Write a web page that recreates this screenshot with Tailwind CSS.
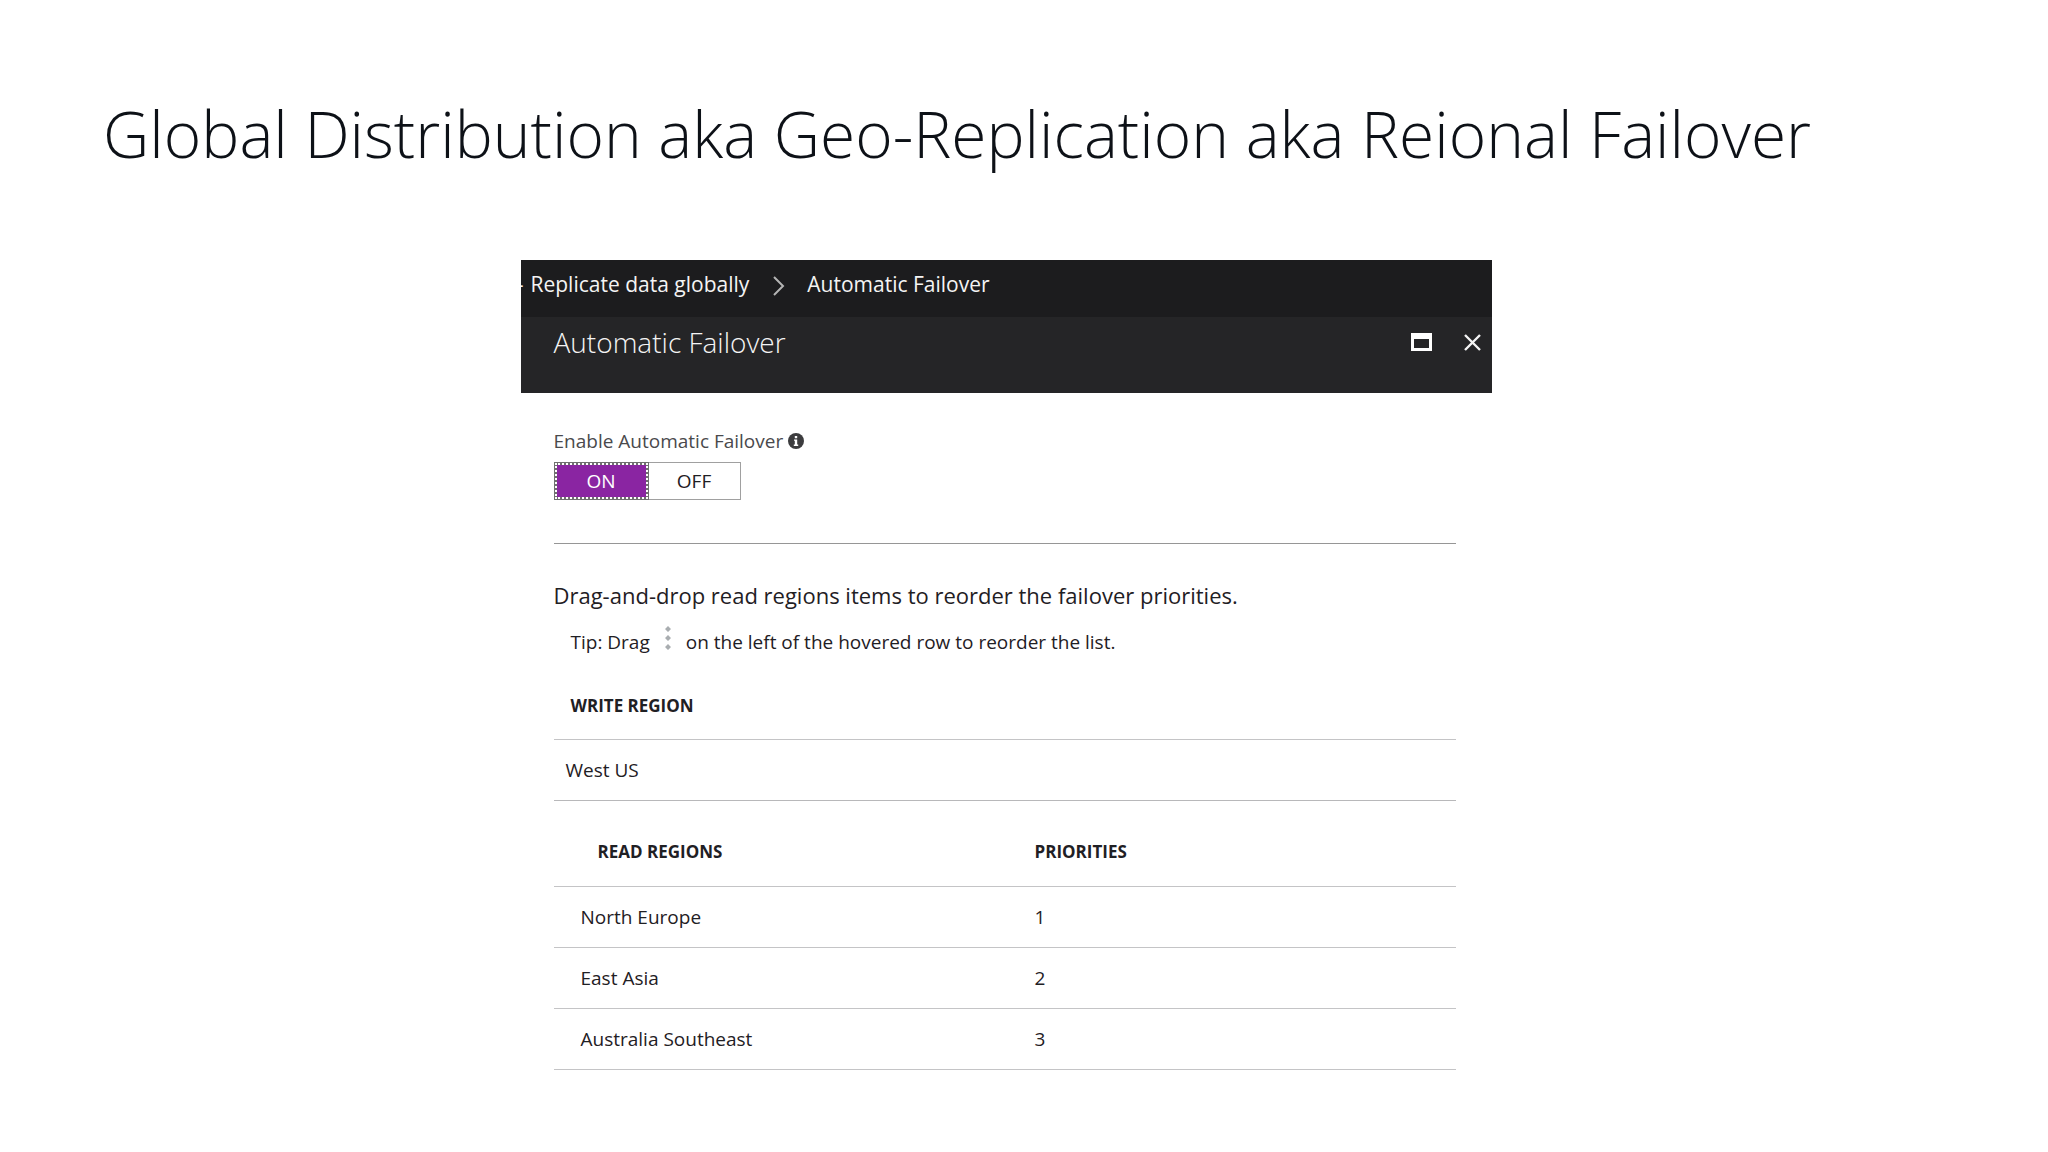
<!DOCTYPE html>
<html lang="en">
<head>
  <meta charset="UTF-8">
  <meta name="viewport" content="width=device-width, initial-scale=1">
  <title>Automatic Failover</title>
  <script src="https://cdn.jsdelivr.net/npm/@tailwindcss/browser@4"></script>
</head>
<body class="bg-white min-h-screen font-['Open_Sans',sans-serif] text-[#1f2024]">

  <h1 class="px-[103px] pt-[94px] text-[64px] leading-[80px] font-light text-[#0d1117]">Global Distribution aka Geo-Replication aka Reional Failover</h1>

  <main class="flex justify-center pr-9 mt-[86px]">
    <section class="w-full max-w-[971px]">

      <!-- Breadcrumb -->
      <nav class="flex items-center h-[57px] pb-2.5 bg-[#1c1c1e] text-[21px] leading-8 text-[#f4f4f4]">
        <span class="flex justify-end w-[3px] overflow-hidden">-</span>
        <a href="#" class="ml-[7px]">Replicate data globally</a>
        <svg class="w-3 h-5 ml-6 mt-1" viewBox="0 0 12 20" fill="none" stroke="#b4b4b4" stroke-width="2">
          <path d="M1 1l9 9-9 9"/>
        </svg>
        <a href="#" class="ml-[22px]">Automatic Failover</a>
      </nav>

      <header class="flex items-start justify-between h-[76px] pt-[5px] pl-[33px] pr-[11px] bg-[#252527]">
        <h2 class="text-[28px] leading-10 font-light text-[#f4f4f4]">Automatic Failover</h2>
        <div class="flex items-center h-10 gap-8">
          <button type="button" aria-label="Maximize">
            <svg class="w-[21px] h-[18px]" viewBox="0 0 21 18" fill="#fff">
              <path fill-rule="evenodd" d="M0 0h21v18H0zM3 6v9h15V6z"/>
            </svg>
          </button>
          <button type="button" aria-label="Close">
            <svg class="w-[17px] h-[17px]" viewBox="0 0 17 17" fill="none" stroke="#f4f4f4" stroke-width="2.4">
              <path d="M1 1l15 15M16 1L1 16"/>
            </svg>
          </button>
        </div>
      </header>

      <div class="pl-[33px] pr-9 pt-[34px]">
        <!-- Toggle -->
        <div class="flex items-center gap-[5px] text-[19px] leading-7 text-[#4a4a4c]">
          <span id="failoverLabel">Enable Automatic Failover</span>
          <svg class="w-4 h-4" viewBox="0 0 16 16">
            <circle cx="8" cy="8" r="8" fill="#3c3c3e"/>
            <path d="M6.800 3h2.400v2.200H6.800zM6 6.400h3.200v5.200h1v1.400H5.800v-1.400h1V7.800H6z" fill="#fff"/>
          </svg>
        </div>
        <div role="group" aria-labelledby="failoverLabel" class="flex mt-[7px] text-[19px] leading-7">
          <button type="button" aria-pressed="true" class="w-[95px] h-[38px] border border-[#707070] bg-[#707070] text-white">
            <span class="flex items-center justify-center h-full border-2 border-dotted border-white bg-[#8a25a2] bg-clip-padding">ON</span>
          </button>
          <button type="button" aria-pressed="false" class="w-[92px] h-[38px] border border-l-0 border-[#a0a0a0] bg-white text-[#1f2024]">OFF</button>
        </div>

        <hr class="mt-[43px] border-t-1 border-[#969696]">

        <p class="mt-[35px] text-[22px] leading-8">Drag-and-drop read regions items to reorder the failover priorities.</p>
        <p class="flex items-center h-7 mt-[17px] pl-[17px] text-[19px] leading-7">
          Tip: Drag
          <svg class="w-2 h-6 ml-3.5 mr-3.5 mb-2" viewBox="0 0 8 24" fill="#a9adb0">
            <path d="M4 0l3 3-3 3-3-3zM4 9l3 3-3 3-3-3zM4 18l3 3-3 3-3-3z"/>
          </svg>
          on the left of the hovered row to reorder the list.
        </p>

        <table class="w-full text-left">
          <thead>
            <tr class="border-b border-[#c4c4c6] text-[17px] leading-6">
              <th class="pt-[38px] pb-[21px] pl-[17px] font-bold">WRITE REGION</th>
            </tr>
          </thead>
          <tbody>
            <tr class="h-[61px] border-b border-[#b8b8ba] text-[19px] leading-7">
              <td class="pl-3">West US</td>
            </tr>
          </tbody>
        </table>

        <table class="w-full text-left">
          <thead>
            <tr class="border-b border-[#c4c4c6] text-[17px] leading-6">
              <th class="w-[481px] pt-[39px] pb-[22px] pl-11 font-bold">READ REGIONS</th>
              <th class="pt-[39px] pb-[22px] font-bold">PRIORITIES</th>
            </tr>
          </thead>
          <tbody class="text-[19px] leading-7">
            <tr class="h-[61px] border-b border-[#c4c4c6]">
              <td class="pl-[27px]">North Europe</td>
              <td>1</td>
            </tr>
            <tr class="h-[61px] border-b border-[#c4c4c6]">
              <td class="pl-[27px]">East Asia</td>
              <td>2</td>
            </tr>
            <tr class="h-[61px] border-b border-[#c4c4c6]">
              <td class="pl-[27px]">Australia Southeast</td>
              <td>3</td>
            </tr>
          </tbody>
        </table>
      </div>
    </section>
  </main>

</body>
</html>
